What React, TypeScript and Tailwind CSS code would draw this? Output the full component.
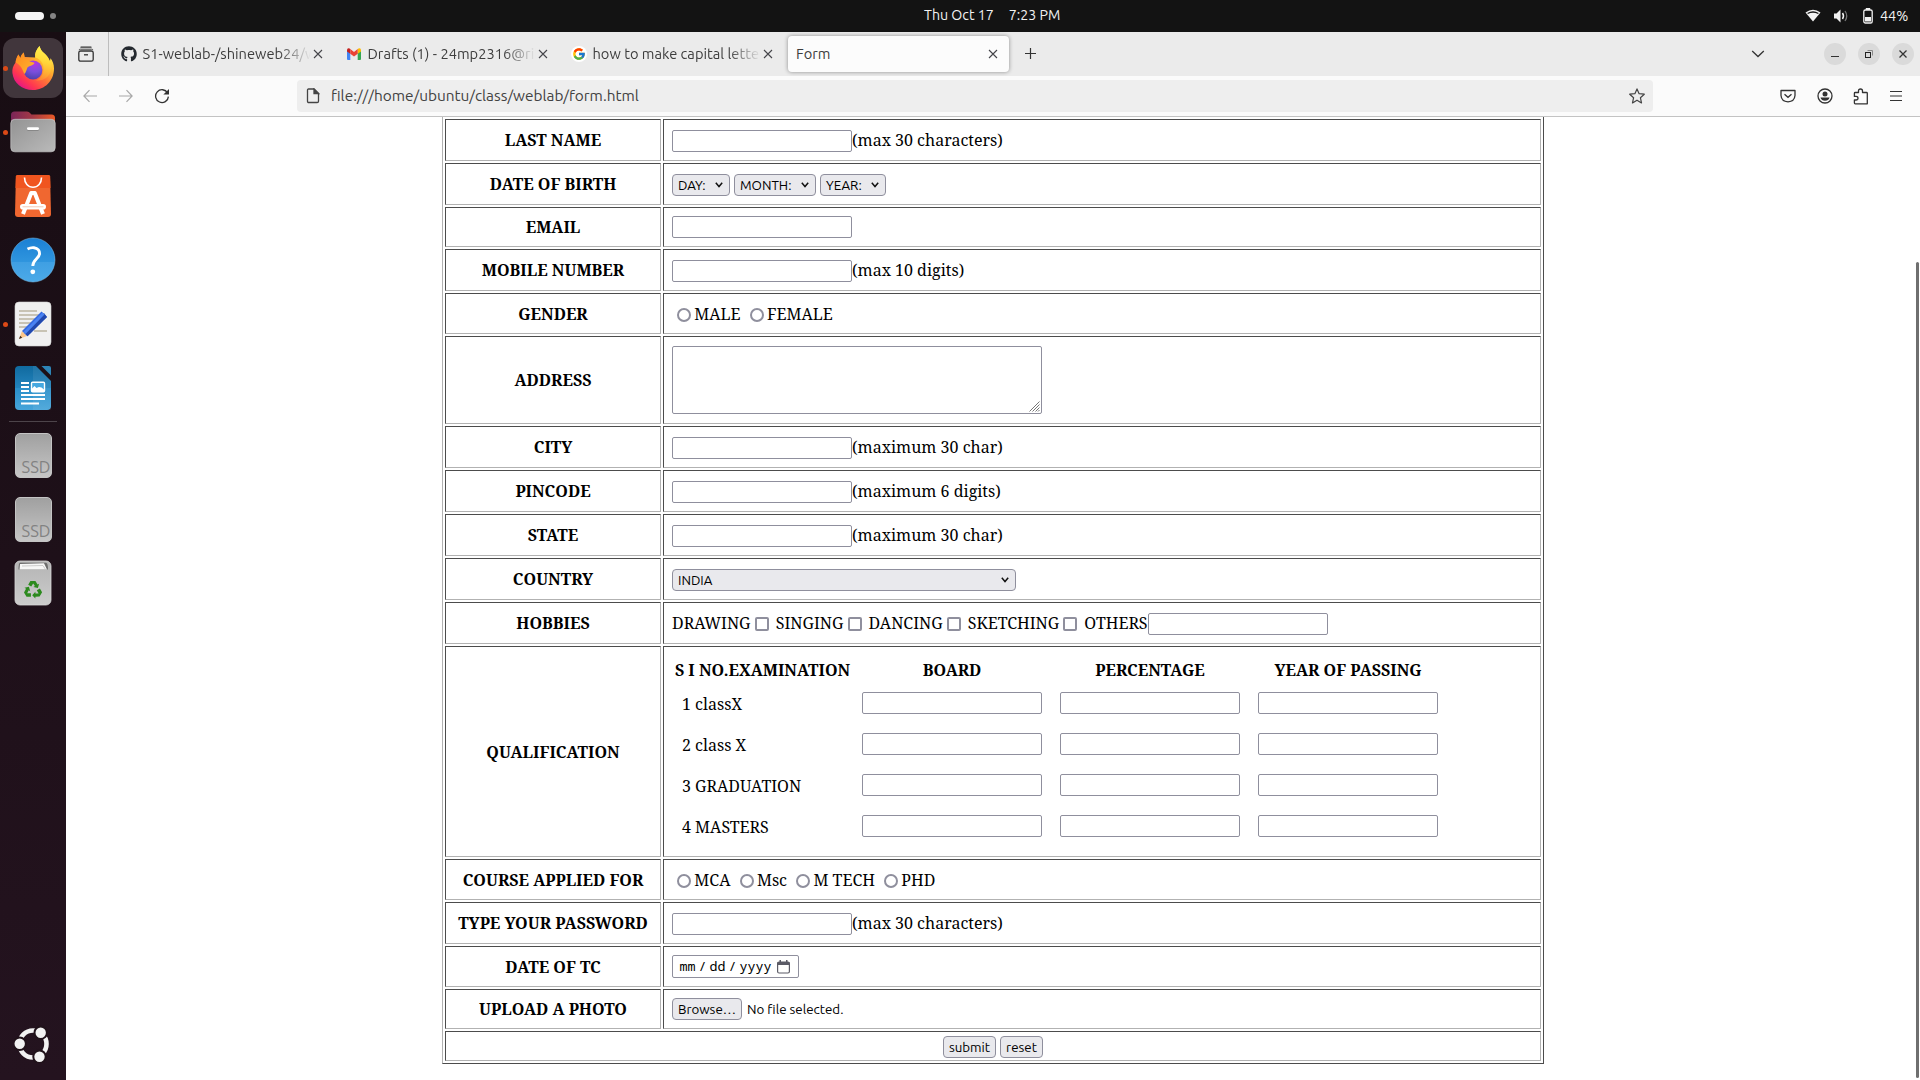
import React from "react";
import { FaGithub } from "react-icons/fa";
import { FcGoogle } from "react-icons/fc";

/* ---------- dock icons ---------- */

function FirefoxIcon() {
  return (
    <svg width="44" height="46" viewBox="0 0 44 46" className="block">
      <defs>
        <linearGradient id="ffBody" x1="0.85" y1="0.1" x2="0.2" y2="0.95">
          <stop offset="0" stopColor="#fff44f" />
          <stop offset="0.3" stopColor="#ffb52e" />
          <stop offset="0.55" stopColor="#ff7139" />
          <stop offset="0.8" stopColor="#ff3750" />
          <stop offset="1" stopColor="#e31587" />
        </linearGradient>
        <radialGradient id="ffGlobe" cx="0.6" cy="0.15" r="0.9">
          <stop offset="0" stopColor="#b833e1" />
          <stop offset="0.5" stopColor="#7a4fdc" />
          <stop offset="1" stopColor="#4a3fa8" />
        </radialGradient>
        <linearGradient id="ffFlame" x1="0.6" y1="0" x2="0.5" y2="1">
          <stop offset="0" stopColor="#fff44f" />
          <stop offset="0.45" stopColor="#ffd83a" />
          <stop offset="1" stopColor="#ff9a2e" stopOpacity="0.6" />
        </linearGradient>
        <linearGradient id="ffHead" x1="0" y1="0" x2="1" y2="1">
          <stop offset="0" stopColor="#ff8a1e" />
          <stop offset="1" stopColor="#ffb62e" />
        </linearGradient>
      </defs>
      <path
        d="M28.5 1C25.5 4.5 23.5 8.500 24 12.500L13.500 12L12.800 7.500C11 9 9.800 11 9.300 13L7.500 9.500C5.500 12.500 4.700 15.500 4.600 17.500C2 20.500 1 24.500 1.400 28C2.500 38 11 45 22 45C34 45 43 35.500 43 23.500C43 19.500 41.500 15.500 39.500 13.200L38.800 17C38 12 34.500 9.500 31.500 6.800C30 5 29 3.200 28.500 1Z"
        fill="url(#ffBody)"
      />
      <path
        d="M28.500 1C25 5 23.500 9 24.500 12.500C30 14.500 33 19 32.500 25C32.300 30 29 34 25 35.500C33 36.500 40 31 40.500 22C40.500 17 37 11.500 31.500 6.800C30 5 29 3.200 28.500 1Z"
        fill="url(#ffFlame)"
      />
      <circle cx="22" cy="25" r="9.400" fill="url(#ffGlobe)" />
      <path
        d="M4.600 17.500C5 14 6 11.500 7.500 9.500L9.300 13.500C10.200 10.500 11.500 8.800 12.800 7.500L13.800 13.500C16 13.800 18 15.200 19 16.500L23.500 17.800C23 20 19.500 20.800 17 22C15.500 23.500 16 26 13.500 29C11 24 10 20 4.600 17.500Z"
        fill="url(#ffHead)"
      />
    </svg>
  );
}

function FilesIcon() {
  return (
    <svg width="46" height="42" viewBox="0 0 46 42" className="block">
      <defs>
        <linearGradient id="flBack" x1="0" y1="0" x2="1" y2="0">
          <stop offset="0" stopColor="#7a2558" />
          <stop offset="0.5" stopColor="#a53a45" />
          <stop offset="1" stopColor="#ec5a26" />
        </linearGradient>
        <linearGradient id="flFront" x1="0" y1="0" x2="1" y2="1">
          <stop offset="0" stopColor="#939393" />
          <stop offset="1" stopColor="#bababa" />
        </linearGradient>
      </defs>
      <path d="M1 4Q1 .5 4.500 .5H17Q19 .5 20 2L21.500 3.500H41.500Q45 3.500 45 7V20H1Z" fill="url(#flBack)" />
      <rect x=".8" y="8.300" width="44.400" height="32.500" rx="4" fill="url(#flFront)" stroke="#c9c9c9" strokeWidth=".7" />
      <rect x="17" y="17.400" width="12" height="2" rx="1" fill="#6d6d6d" />
      <rect x="17" y="16.300" width="12" height="2.800" rx="1.300" fill="#fff" />
    </svg>
  );
}

function SoftwareIcon() {
  return (
    <svg width="38" height="44" viewBox="0 0 38 44" className="block">
      <path d="M3.500 1H34.500Q36 1 36.100 2.500L37 40Q37 43 34 43H4Q1 43 1 40L1.900 2.500Q2 1 3.500 1Z" fill="#f06730" />
      <path d="M3.500 1H34.500Q36 1 36.100 2.500L36.500 14H1.500L1.900 2.500Q2 1 3.500 1Z" fill="#f0551f" />
      <path d="M10.500 3.500C10.500 9 14 13.200 19 13.200S27.500 9 27.500 3.500" fill="none" stroke="#fff" strokeWidth="1.600" />
      <path d="M9 40L17.200 19H20.800L29 40" fill="none" stroke="#fff" strokeWidth="4" strokeLinejoin="round" />
      <rect x="6" y="30" width="26" height="5.600" rx="2.800" fill="#fff" />
      <path d="M8.500 32.800H29.500" stroke="#f6c9b5" strokeWidth="1" />
    </svg>
  );
}

function HelpIcon() {
  return (
    <svg width="46" height="46" viewBox="0 0 46 46" className="block">
      <defs>
        <linearGradient id="hp" x1="0" y1="0" x2="0" y2="1">
          <stop offset="0" stopColor="#1b80d4" />
          <stop offset="0.54" stopColor="#2f95de" />
          <stop offset="0.55" stopColor="#3f9fe3" />
          <stop offset="1" stopColor="#4caae8" />
        </linearGradient>
      </defs>
      <circle cx="23" cy="23" r="22" fill="url(#hp)" stroke="#7cc3ee" strokeWidth=".5" />
      <path d="M17.500 12C20 10.800 22.300 10.500 24 10.700C28 11.200 29.800 14 29.500 17C29 21.500 22.800 22.500 22.800 29" fill="none" stroke="#fff" strokeWidth="2.900" />
      <circle cx="22.800" cy="34.800" r="2.400" fill="#fff" />
    </svg>
  );
}

function TextEditorIcon() {
  return (
    <svg width="38" height="46" viewBox="0 0 38 46" className="block">
      <rect x="1" y="1" width="36" height="44" rx="4" fill="#f0f0f0" stroke="#d5d5d5" strokeWidth=".6" />
      <path d="M5 10H23M5 14H25M5 18H22M5 22H18M5 26H15M20 30H33" stroke="#c8c3b4" strokeWidth="2" />
      <path d="M5 38L8 30L13 35Z" fill="#fbc58a" />
      <path d="M5 38L6.200 34.800L8.200 36.700Z" fill="#3a2c22" />
      <path d="M8 30L27.500 10.500L33 16L13.500 35.200Z" fill="#3468e0" />
      <path d="M10 31.800L30 12L33 16L13.500 35.200Z" fill="#2248ad" />
      <path d="M9.500 31L28.500 11.500L30.500 13.500L11.500 33Z" fill="#4a82f2" />
    </svg>
  );
}

function WriterIcon() {
  return (
    <svg width="38" height="46" viewBox="0 0 38 46" className="block">
      <defs>
        <linearGradient id="wr" x1="0" y1="0" x2="0" y2="1">
          <stop offset="0" stopColor="#106a9f" />
          <stop offset="0.5" stopColor="#2384bd" />
          <stop offset="0.51" stopColor="#2b8fc9" />
          <stop offset="1" stopColor="#46a5da" />
        </linearGradient>
      </defs>
      <path d="M5 1H22L37 16V41Q37 45 33 45H5Q1 45 1 41V5Q1 1 5 1Z" fill="url(#wr)" />
      <path d="M19 1H22L37 16V45H19Z" fill="#ffffff" opacity=".07" />
      <path d="M27.500 1H35Q37 1 37 3V10.500Z" fill="#2d85b7" />
      <path d="M7 18H15M7 22H15M7 26H15M7 30H31M7 34H31M7 38.500H25" stroke="#fff" strokeWidth="2.200" />
      <rect x="17.500" y="17.300" width="13" height="9.500" rx="1" fill="#46a8e0" stroke="#fff" strokeWidth="1.400" />
      <path d="M18 26V23.500L20.500 21L22.500 23L25 22L27.500 22.500L30 24.500V26Z" fill="#fff" />
    </svg>
  );
}

function SsdIcon() {
  return (
    <div className="flex h-[45px] w-[37px] items-end justify-end rounded-[5px] border border-[#c4c4c4] bg-gradient-to-b from-[#a0a0a0] to-[#c6c6c6]">
      <span className="font-['Ubuntu'] text-[16.500px] leading-[20px] text-[#828282]">SSD</span>
    </div>
  );
}

function TrashIcon() {
  return (
    <svg width="38" height="46" viewBox="0 0 38 46" className="block">
      <defs>
        <linearGradient id="tr" x1="0" y1="0" x2="0" y2="1">
          <stop offset="0" stopColor="#b4b4b4" />
          <stop offset="1" stopColor="#cccccc" />
        </linearGradient>
      </defs>
      <rect x="1" y="1" width="36" height="44" rx="5" fill="url(#tr)" stroke="#d8d8d8" strokeWidth=".8" />
      <path d="M6 2.800H32Q34 3 34 9.500H4.500Q4.500 3 6 2.800Z" fill="#6b6b6b" />
      <path d="M6 4L30 3.200L33 9.500H5.500Z" fill="#f7f7f7" />
      <path d="M8 6L29 5.500L31.500 9.500" fill="none" stroke="#b9b9b9" strokeWidth=".7" />
      <g transform="translate(19 30)" fill="#2c8a1e">
        {[0, 120, 240].map((a) => (
          <g key={a} transform={`rotate(${a})`}>
            <path d="M-4.800 -5.200L-2.600 -9H2.400L4.600 -5.400L6.100 -6.300L4.900 -1.900L.4 -3L1.900 -3.900L.2 -6.600L-1.800 -3.400Z" />
          </g>
        ))}
      </g>
    </svg>
  );
}

function UbuntuIcon() {
  return (
    <svg width="38" height="38" viewBox="0 0 38 38" className="block">
      <circle cx="19" cy="19" r="13.500" fill="none" stroke="#f2f2f2" strokeWidth="4.600" />
      <g fill="#f2f2f2" stroke="#20121a" strokeWidth="2">
        <circle cx="26.700" cy="7.700" r="6.200" />
        <circle cx="5.700" cy="18.800" r="6.200" />
        <circle cx="25.500" cy="31.700" r="6.200" />
      </g>
    </svg>
  );
}

function DockItem({ running, active, children }: { running?: boolean; active?: boolean; children: React.ReactNode }) {
  return (
    <div className="flex h-[60px] w-[66px] items-center">
      <div className="flex w-[3px] shrink-0 justify-start">
        {running && <span className="relative left-[3px] z-10 size-[5px] shrink-0 rounded-full bg-[#dc4a17]" />}
      </div>
      <div className={`flex h-[60px] w-[60px] items-center justify-center ${active ? "rounded-[12px] bg-[#41363c]" : ""}`}>{children}</div>
    </div>
  );
}

/* ---------- browser chrome ---------- */

function CloseX() {
  return (
    <svg width="10" height="10" viewBox="0 0 10 10" className="block">
      <path d="M1 1L9 9M9 1L1 9" stroke="#45454a" strokeWidth="1.100" />
    </svg>
  );
}

function GmailIcon() {
  return (
    <svg width="16" height="16" viewBox="0 0 16 16" className="block">
      <path d="M1 4V13Q1 14 2 14H4.300V7.500Z" fill="#4285f4" />
      <path d="M15 4V13Q15 14 14 14H11.700V7.500Z" fill="#34a853" />
      <path d="M1 4.200Q1 2 3 2.300L4.300 3V7.800L1 5.500Z" fill="#c5221f" />
      <path d="M15 4.200Q15 2 13 2.300L11.700 3V7.800L15 5.500Z" fill="#fbbc04" />
      <path d="M4.300 3L8 5.900L11.700 3V7.700L8 10.500L4.300 7.700Z" fill="#ea4335" />
    </svg>
  );
}

function Tab({ icon, title, active }: { icon?: React.ReactNode; title: string; active?: boolean }) {
  return (
    <div className={`mr-1 flex h-9 w-[221px] items-center rounded-[4px] pl-2 ${active ? "bg-[#fcfcfc] shadow-[0_0_4px_rgba(0,0,0,0.4)]" : ""}`}>
      {icon && <span className="mr-[5.500px] size-4 shrink-0">{icon}</span>}
      <span className={`min-w-0 flex-1 overflow-hidden whitespace-nowrap text-[14.667px] leading-[20px] text-[#3d3d3d] ${active ? "" : "[mask-image:linear-gradient(to_left,transparent,black_32px)]"}`}>
        {title}
      </span>
      <span className="mr-[11px] ml-[2px] shrink-0"><CloseX /></span>
    </div>
  );
}

function TopBar() {
  return (
    <div className="flex h-8 shrink-0 items-center bg-[#131313] text-[14.400px] leading-[20px] text-[#f2f2f2]">
      <div className="flex w-[66px] items-center gap-[6px] pl-[15px]">
        <span className="h-2 w-[29px] rounded-full bg-[#f5f5f5]" />
        <span className="size-[6px] rounded-full bg-[#848484]" />
      </div>
      <div className="w-[858px]" />
      <div className="flex gap-[15px] whitespace-pre pb-[2px] text-[14.200px]">
        <span>Thu Oct 17</span>
        <span>7:23 PM</span>
      </div>
      <div className="flex flex-1 items-center justify-end pr-[11px]">
        <svg width="16" height="14" viewBox="0 0 16 14" className="mr-3">
          <path d="M0.500 3.500Q8 -2 15.500 3.500L8 12.500Z" fill="#f2f2f2" />
          <path d="M2.600 4.500Q8 1.500 13.400 4.500" fill="none" stroke="#131313" strokeWidth="1.300" />
        </svg>
        <svg width="16" height="16" viewBox="0 0 16 16" className="mr-[14px]">
          <path d="M1 5.500H3.500L7.500 1.500V14.500L3.500 10.500H1Z" fill="#f2f2f2" />
          <path d="M9.500 5Q11.500 8 9.500 11" fill="none" stroke="#f2f2f2" strokeWidth="1.500" />
          <path d="M12 3Q15.500 8 12 13" fill="none" stroke="#777" strokeWidth="1.300" />
        </svg>
        <svg width="10" height="16" viewBox="0 0 10 16" className="mr-[7px]">
          <rect x=".8" y="2" width="8.400" height="13" rx="1.600" fill="none" stroke="#f2f2f2" strokeWidth="1.300" />
          <rect x="2.800" y="0" width="4.400" height="2" fill="#f2f2f2" />
          <rect x="2" y="9" width="6" height="4.500" fill="#f2f2f2" />
        </svg>
        <span className="w-[29px] whitespace-nowrap">44%</span>
      </div>
    </div>
  );
}

function TabStrip() {
  return (
    <div className="flex h-11 shrink-0 items-center bg-[#ebebeb]">
      <div className="flex h-full w-[43px] items-center border-r border-[#bdbdbd] pl-3">
        <svg width="16" height="16" viewBox="0 0 16 16" fill="none" stroke="#333" strokeWidth="1.300">
          <path d="M3 1.200H13" strokeLinecap="round" />
          <path d="M1 4Q1.300 3.200 2.300 3.200H13.700Q14.700 3.200 15 4" strokeWidth=".9" />
          <rect x=".8" y="5" width="14.400" height="10.200" rx="1.800" />
          <path d="M6 8.800H10" />
        </svg>
      </div>
      <div className="flex pl-1">
        <Tab icon={<FaGithub className="size-4 text-[#24292f]" />} title="S1-weblab-/shineweb24/w" />
        <Tab icon={<GmailIcon />} title="Drafts (1) - 24mp2316@rit" />
        <Tab icon={<span className="flex size-4 items-center justify-center rounded-full bg-white"><FcGoogle className="size-[14px]" /></span>} title="how to make capital lette" />
        <Tab title="Form" active />
      </div>
      <svg width="12" height="12" viewBox="0 0 12 12" className="ml-3">
        <path d="M5.500 0V11M0 5.500H11" stroke="#333" strokeWidth="1.200" />
      </svg>
      <div className="ml-auto flex items-center pr-[6px]">
        <svg width="14" height="14" viewBox="0 0 14 14" className="mr-[59px]">
          <path d="M1.200 4L7 9.500L12.800 4" fill="none" stroke="#333" strokeWidth="1.300" />
        </svg>
        <div className="flex gap-3">
          <span className="flex size-[22px] items-center justify-center rounded-full bg-[#dadada]">
            <svg width="8" height="8" viewBox="0 0 8 8"><path d="M0 6.500H8" stroke="#333" strokeWidth="1" /></svg>
          </span>
          <span className="flex size-[22px] items-center justify-center rounded-full bg-[#dadada]">
            <svg width="8" height="8" viewBox="0 0 8 8" fill="none">
              <path d="M2.500 .5H7.500V5.500" stroke="#8a8a8a" />
              <rect x=".5" y="2.500" width="5" height="5" stroke="#222" />
            </svg>
          </span>
          <span className="flex size-[22px] items-center justify-center rounded-full bg-[#dadada]">
            <svg width="8" height="8" viewBox="0 0 8 8"><path d="M.5 .5L7.500 7.500M7.500 .5L.5 7.500" stroke="#333" strokeWidth="1.300" /></svg>
          </span>
        </div>
      </div>
    </div>
  );
}

function ToolBar() {
  return (
    <div className="flex h-[41px] shrink-0 items-center border-b border-[#c3c3c3] bg-[#fbfbfb]">
      <svg width="14" height="14" viewBox="0 0 14 14" className="ml-[17px]" fill="none" stroke="#a8a8a8" strokeWidth="1.200">
        <path d="M14 7H1M6.500 1.200L.9 7L6.500 12.800" />
      </svg>
      <svg width="14" height="14" viewBox="0 0 14 14" className="ml-[22px]" fill="none" stroke="#a8a8a8" strokeWidth="1.200">
        <path d="M0 7H13M7.500 1.200L13.100 7L7.500 12.800" />
      </svg>
      <svg width="16" height="16" viewBox="0 0 16 16" className="ml-[21px]">
        <path d="M13.600 5A6.400 6.400 0 1 0 14.400 8.600" fill="none" stroke="#333" strokeWidth="1.300" />
        <path d="M15 1V6.600H9.400Z" fill="#333" />
      </svg>
      <div className="ml-[127px] flex h-8 w-[1356px] items-center rounded-[4px] bg-[#eeeeee] pr-2">
        <svg width="14" height="16" viewBox="0 0 14 16" className="ml-[9px]" fill="none" stroke="#444" strokeWidth="1.300">
          <path d="M2.500 1H8L12.500 5.500V13.200Q12.500 14.500 11.200 14.500H2.800Q1.500 14.500 1.500 13.200V2.200Q1.500 1 2.500 1Z" />
          <path d="M8 1V5.500H12.500Z" fill="#444" />
        </svg>
        <span className="ml-[11px] whitespace-pre text-[15.400px] leading-[20px] text-[#424242]">file:///home/ubuntu/class/weblab/form.html</span>
        <svg width="16" height="16" viewBox="0 0 16 16" className="ml-auto" fill="none" stroke="#444" strokeWidth="1.200" strokeLinejoin="round">
          <path d="M8 .9L10.100 5.700L15.300 6.200L11.400 9.700L12.500 14.900L8 12.200L3.500 14.900L4.600 9.700L.7 6.200L5.900 5.700Z" />
        </svg>
      </div>
      <div className="ml-auto flex items-center pr-[18px]">
        <svg width="16" height="16" viewBox="0 0 16 16" className="mr-[21px]" fill="none" stroke="#333" strokeWidth="1.300">
          <path d="M1 2.500H15V7.500Q14.500 13.500 8 13.800Q1.500 13.500 1 7.500Z" strokeLinejoin="round" />
          <path d="M4.500 6.200L8 9.300L11.500 6.200" />
        </svg>
        <svg width="16" height="16" viewBox="0 0 16 16" className="mr-5">
          <circle cx="8" cy="8" r="7" fill="none" stroke="#333" strokeWidth="1.300" />
          <circle cx="8" cy="6" r="2.500" fill="#333" />
          <path d="M3.500 9.500H12.500Q11.500 12.700 8 12.700T3.500 9.500Z" fill="#333" />
        </svg>
        <svg width="16" height="17" viewBox="0 0 16 17" className="mr-[21px]" fill="none" stroke="#333" strokeWidth="1.300" strokeLinejoin="round">
          <path d="M5.500 4.500V3Q5.500 1 7.500 1T9.500 3V4.500H13.500Q14.300 4.500 14.300 5.300V15.800H2.200Q1.400 15.800 1.400 15V12H3Q5 12 5 10.200T3 8.400H1.400V5.300Q1.400 4.500 2.200 4.500Z" />
        </svg>
        <svg width="12" height="12" viewBox="0 0 12 12" stroke="#333" strokeWidth="1.200">
          <path d="M0 1.500H12M0 6H12M0 10.500H12" />
        </svg>
      </div>
    </div>
  );
}

/* ---------- form ---------- */

const cellBorder = "border border-t-[#4c4c4c] border-l-[#4c4c4c] border-r-[#b2b2b2] border-b-[#b2b2b2]";

function Field() {
  return <input aria-label="field" className="block h-[22px] w-[180px] shrink-0 rounded-[2px] border border-[#8f8f9d] bg-white" />;
}

function Select({ label, className }: { label: string; className: string }) {
  return (
    <div className={`flex h-[22px] shrink-0 items-center justify-between rounded-[4px] border border-[#8f8f9d] bg-[#e9e9ed] pr-[6px] pl-[5px] font-['Ubuntu'] text-[13.333px] leading-[20px] text-black ${className}`}>
      <span className="pt-px">{label}</span>
      <svg width="8" height="6" viewBox="0 0 8 6"><path d="M.8 .8L4 4.500L7.200 .8" fill="none" stroke="#111" strokeWidth="1.500" /></svg>
    </div>
  );
}

function Button({ label, className }: { label: string; className: string }) {
  return (
    <button className={`h-[22px] shrink-0 rounded-[4px] border border-[#8f8f9d] bg-[#e9e9ed] pt-px text-center font-['Ubuntu'] text-[13.333px] leading-[19px] text-black ${className}`}>
      {label}
    </button>
  );
}

function Radio({ label }: { label: string }) {
  return (
    <>
      <span className="mt-[5px] mr-[3px] ml-[5.300px] size-[14px] shrink-0 rounded-full border-2 border-[#8f8f9d] bg-white" />
      <span className="whitespace-pre">{label + " "}</span>
    </>
  );
}

function Check({ label }: { label: string }) {
  return (
    <>
      <span className="whitespace-pre">{label}</span>
      <span className="mt-[5px] mr-[6.960px] ml-[4.200px] size-[14px] shrink-0 rounded-[2px] border-2 border-[#8f8f9d] bg-white" />
    </>
  );
}

function Row({ label, height, children }: { label: string; height: string; children: React.ReactNode }) {
  return (
    <div className={`flex gap-[2px] ${height}`}>
      <div className={`flex w-[216px] items-center justify-center font-bold ${cellBorder}`}>{label}</div>
      <div className={`flex w-[878px] items-start pl-2 ${cellBorder}`}>{children}</div>
    </div>
  );
}

function FieldRow({ label, hint }: { label: string; hint: string }) {
  return (
    <Row label={label} height="h-[42px]">
      <div className="flex pt-[9px]">
        <div className="pt-px"><Field /></div>
        <span>{hint}</span>
      </div>
    </Row>
  );
}

const exams = ["1 classX", "2 class X", "3 GRADUATION", "4 MASTERS"];

function Qualification() {
  return (
    <div className="flex flex-col pt-3">
      <div className="mb-[11px] grid h-[22px] grid-cols-[181px_198px_198px_198px] text-center font-bold">
        <span>S I NO.EXAMINATION</span>
        <span>BOARD</span>
        <span>PERCENTAGE</span>
        <span>YEAR OF PASSING</span>
      </div>
      <div className="flex flex-col gap-[19px]">
        {exams.map((exam) => (
          <div key={exam} className="grid h-[22px] grid-cols-[181px_198px_198px_198px]">
            <span className="pt-px pl-[10px]">{exam}</span>
            <div className="flex justify-center"><Field /></div>
            <div className="flex justify-center"><Field /></div>
            <div className="flex justify-center"><Field /></div>
          </div>
        ))}
      </div>
    </div>
  );
}

function FormTable() {
  return (
    <div className="ml-[376px] flex w-[1102px] flex-col gap-[2px] border-r border-b border-l border-r-[#4c4c4c] border-b-[#4c4c4c] border-l-[#b2b2b2] px-[2px] py-[2px] font-['Noto_Serif'] text-[16px] leading-[22px] text-black">
      <FieldRow label="LAST NAME" hint="(max 30 characters)" />
      <Row label="DATE OF BIRTH" height="h-[42px]">
        <div className="flex gap-1 pt-[10px]">
          <Select label="DAY:" className="w-[58px]" />
          <Select label="MONTH:" className="w-[82px]" />
          <Select label="YEAR:" className="w-[66px]" />
        </div>
      </Row>
      <Row label="EMAIL" height="h-[40px]">
        <div className="pt-2"><Field /></div>
      </Row>
      <FieldRow label="MOBILE NUMBER" hint="(max 10 digits)" />
      <Row label="GENDER" height="h-[41px]">
        <div className="flex pt-[9px]"><Radio label="MALE" /><Radio label="FEMALE" /></div>
      </Row>
      <Row label="ADDRESS" height="h-[88px]">
        <div className="mt-[9px] flex h-[68px] w-[370px] items-end justify-end rounded-[2px] border border-[#8f8f9d] p-px">
          <svg width="11" height="11" viewBox="0 0 11 11"><path d="M.5 10.500L10.500 .5M3.500 10.500L10.500 3.500M6.500 10.500L10.500 6.500M9 10.500L10.500 9" stroke="#777" strokeWidth="1" /></svg>
        </div>
      </Row>
      <FieldRow label="CITY" hint="(maximum 30 char)" />
      <FieldRow label="PINCODE" hint="(maximum 6 digits)" />
      <FieldRow label="STATE" hint="(maximum 30 char)" />
      <Row label="COUNTRY" height="h-[42px]">
        <div className="pt-[10px]"><Select label="INDIA" className="w-[344px]" /></div>
      </Row>
      <Row label="HOBBIES" height="h-[42px]">
        <div className="flex pt-[9px]">
          <Check label="DRAWING" />
          <Check label="SINGING" />
          <Check label="DANCING" />
          <Check label="SKETCHING" />
          <span>OTHERS</span>
          <div className="pt-px"><Field /></div>
        </div>
      </Row>
      <Row label="QUALIFICATION" height="h-[211px]"><Qualification /></Row>
      <Row label="COURSE APPLIED FOR" height="h-[41px]">
        <div className="flex pt-[9px]"><Radio label="MCA" /><Radio label="Msc" /><Radio label="M TECH" /><Radio label="PHD" /></div>
      </Row>
      <FieldRow label="TYPE YOUR PASSWORD" hint="(max 30 characters)" />
      <Row label="DATE OF TC" height="h-[41px]">
        <div className="mt-2 flex h-[23px] w-[127px] items-start rounded-[2px] border border-[#8f8f9d] pl-[6.500px] font-['Noto_Sans_Mono'] text-[13.333px] leading-[20px]">
          <span>mm</span>
          <span className="mx-[3px]">/</span>
          <span>dd</span>
          <span className="mx-[3px]">/</span>
          <span>yyyy</span>
          <svg width="13" height="14" viewBox="0 0 13 14" className="mt-1 ml-[5px]">
            <rect x=".6" y="2" width="11.800" height="11" rx="1.500" fill="none" stroke="#5b5b66" strokeWidth="1.200" />
            <path d="M.6 2H12.400V5H.6ZM2.500 0H4V2H2.500ZM9 0H10.500V2H9Z" fill="#5b5b66" />
          </svg>
        </div>
      </Row>
      <Row label="UPLOAD A PHOTO" height="h-[40px]">
        <div className="flex pt-2">
          <Button label="Browse…" className="w-[70px]" />
          <span className="ml-[5px] pt-[2px] font-['Ubuntu'] text-[13.333px] leading-[19px]">No file selected.</span>
        </div>
      </Row>
      <div className={`flex h-[30px] items-start justify-center gap-1 pt-1 ${cellBorder}`}>
        <Button label="submit" className="w-[53px]" />
        <Button label="reset" className="w-[43px]" />
      </div>
    </div>
  );
}

export default function App() {
  return (
    <div className="flex h-[1080px] w-[1920px] flex-col overflow-hidden bg-white font-['Ubuntu',sans-serif]">
      <TopBar />
      <div className="flex min-h-0 flex-1">
        <div className="flex w-[66px] shrink-0 flex-col bg-gradient-to-b from-[#180d13] to-[#24131f] pt-[6px]">
          <div className="flex flex-col gap-1">
            <DockItem running active><FirefoxIcon /></DockItem>
            <DockItem running><FilesIcon /></DockItem>
            <DockItem><SoftwareIcon /></DockItem>
            <DockItem><HelpIcon /></DockItem>
            <DockItem running><TextEditorIcon /></DockItem>
            <DockItem><WriterIcon /></DockItem>
          </div>
          <div className="my-[3px] ml-[9px] h-px w-12 bg-[#4d444a]" />
          <div className="flex flex-col gap-1">
            <DockItem><SsdIcon /></DockItem>
            <DockItem><SsdIcon /></DockItem>
            <DockItem><TrashIcon /></DockItem>
          </div>
          <div className="mt-auto mb-[6px]"><DockItem><UbuntuIcon /></DockItem></div>
        </div>
        <div className="flex min-w-0 flex-1 flex-col">
          <TabStrip />
          <ToolBar />
          <div className="flex min-h-0 flex-1 items-start justify-between">
            <FormTable />
            <div className="mt-[145px] mr-px h-[816px] w-[3px] rounded-full bg-[#6f6f6f]" />
          </div>
        </div>
      </div>
    </div>
  );
}
